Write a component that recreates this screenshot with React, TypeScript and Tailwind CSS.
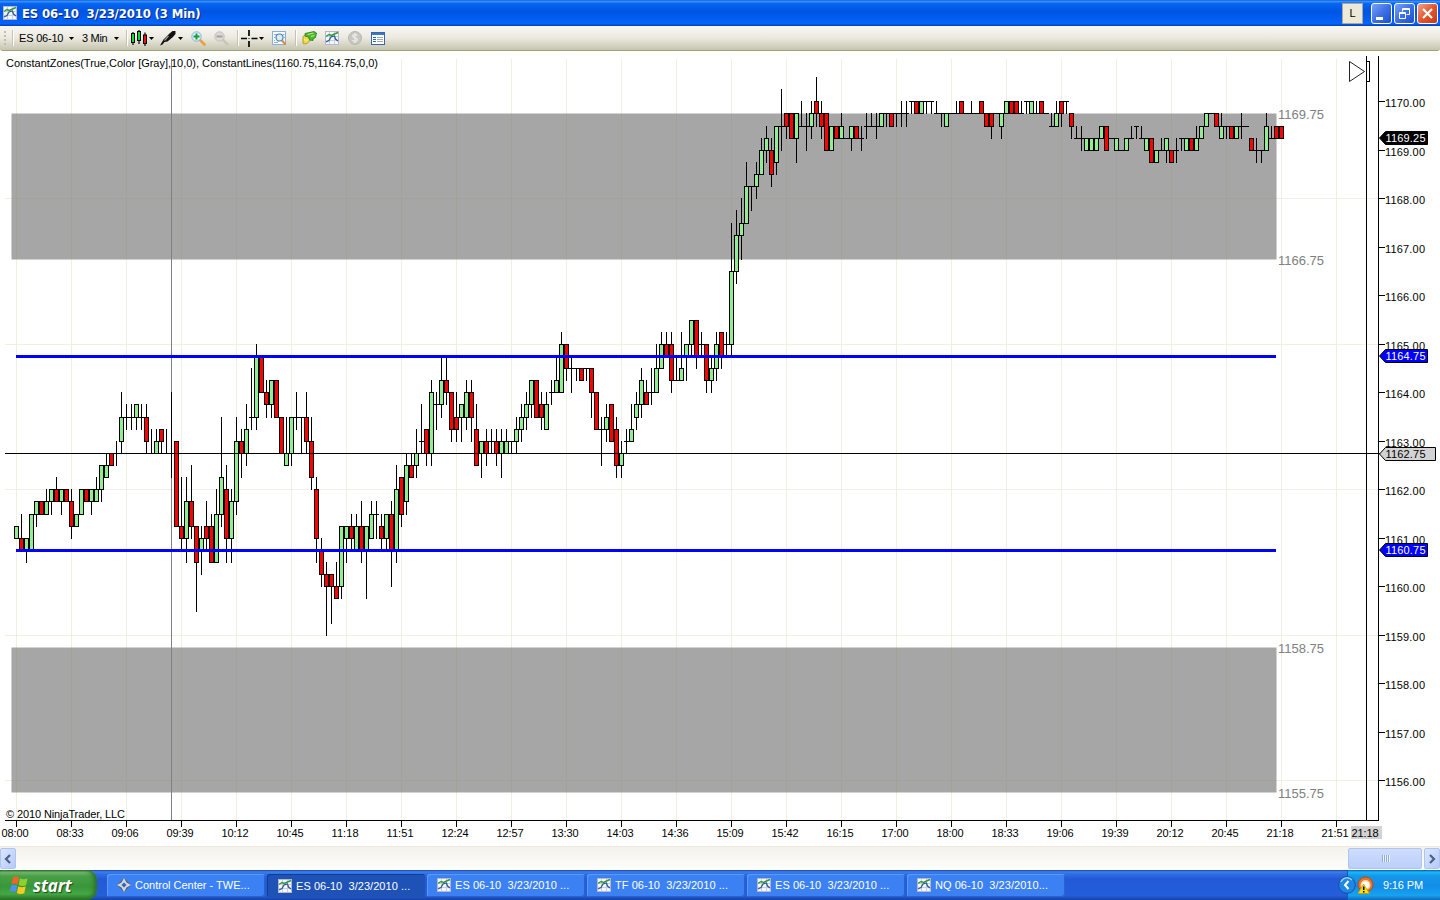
import React from "react";

// [high, open, close, low], counted in quarter points below 1170.00
const CANDLES: number[][] = [
  [35, 36, 35, 36], [34, 36, 37, 37], [36, 37, 36, 38], [34, 37, 34, 37], [33, 34, 33, 35],
  [33, 33, 34, 34], [32, 34, 33, 34], [32, 33, 32, 34], [31, 32, 33, 33], [32, 33, 32, 34],
  [32, 32, 33, 33], [32, 33, 35, 36], [34, 35, 34, 35], [32, 34, 32, 34], [32, 32, 33, 33],
  [32, 33, 32, 34], [31, 33, 32, 33], [30, 32, 30, 33], [29, 31, 30, 31], [29, 29, 30, 30],
  [28, 29, 29, 30], [24, 28, 26, 29], [25, 26, 26, 27], [25, 26, 26, 27], [25, 26, 25, 27],
  [25, 26, 26, 27], [25, 26, 28, 29], [27, 29, 29, 29], [27, 29, 28, 29], [27, 27, 28, 29],
  [27, 29, 29, 29], [24, 29, 29, 31], [28, 28, 35, 35], [31, 35, 36, 37], [31, 36, 33, 38],
  [30, 33, 35, 36], [35, 35, 38, 42], [35, 37, 36, 39], [33, 35, 36, 37], [34, 35, 38, 38],
  [32, 38, 34, 38], [26, 34, 31, 35], [30, 32, 36, 38], [32, 36, 33, 38], [26, 33, 28, 34],
  [27, 28, 29, 31], [25, 29, 27, 30], [22, 26, 26, 27], [20, 26, 21, 27], [21, 21, 24, 24],
  [23, 24, 25, 26], [23, 25, 23, 26], [23, 23, 26, 26], [26, 26, 29, 29], [26, 30, 29, 30],
  [26, 29, 26, 30], [24, 26, 26, 27], [26, 26, 26, 29], [24, 26, 28, 29], [26, 28, 31, 32],
  [31, 32, 36, 38], [36, 37, 39, 40], [38, 39, 40, 44], [39, 39, 40, 43], [38, 40, 41, 41],
  [35, 40, 35, 41], [35, 36, 35, 38], [34, 35, 36, 37], [34, 37, 35, 37], [33, 35, 37, 38],
  [35, 37, 35, 41], [33, 36, 34, 36], [33, 34, 34, 36], [34, 35, 36, 37], [34, 36, 34, 37],
  [33, 34, 37, 40], [30, 37, 32, 38], [31, 31, 34, 35], [29, 33, 30, 34], [29, 30, 31, 31],
  [27, 30, 29, 31], [25, 28, 28, 29], [27, 27, 29, 30], [23, 29, 24, 30], [24, 25, 25, 27],
  [21, 25, 23, 26], [21, 23, 24, 25], [24, 24, 27, 28], [24, 26, 27, 28], [25, 26, 25, 28],
  [23, 26, 24, 27], [23, 24, 26, 28], [25, 27, 30, 30], [28, 29, 28, 31], [27, 28, 29, 30],
  [27, 28, 28, 29], [27, 28, 29, 30], [27, 29, 28, 31], [27, 29, 28, 29], [28, 28, 28, 29],
  [26, 28, 27, 29], [25, 27, 26, 28], [24, 26, 25, 27], [23, 25, 23, 26], [23, 23, 26, 26],
  [24, 25, 26, 27], [24, 27, 25, 27], [23, 24, 24, 25], [21, 24, 23, 24], [19, 24, 20, 24],
  [20, 20, 22, 23], [21, 22, 22, 24], [22, 22, 22, 23], [22, 22, 23, 23], [22, 22, 22, 23],
  [22, 22, 24, 26], [24, 24, 27, 27], [26, 27, 27, 30], [25, 27, 26, 28], [25, 25, 28, 28],
  [26, 27, 30, 31], [28, 30, 29, 31], [27, 28, 28, 29], [25, 28, 27, 28], [24, 26, 25, 27],
  [22, 25, 23, 26], [23, 24, 25, 25], [22, 24, 24, 25], [20, 24, 22, 24], [19, 22, 20, 22],
  [19, 20, 21, 21], [19, 20, 23, 24], [21, 23, 23, 23], [19, 23, 22, 23], [20, 21, 20, 23],
  [18, 20, 18, 21], [18, 18, 21, 22], [19, 20, 20, 21], [20, 20, 23, 24], [21, 23, 22, 24],
  [19, 22, 20, 23], [19, 19, 21, 22], [19, 20, 20, 21], [10, 20, 14, 21], [9, 14, 11, 15],
  [8, 11, 10, 13], [5, 10, 7, 10], [7, 7, 7, 9], [5, 7, 6, 8], [3, 6, 4, 6],
  [2, 4, 3, 5], [3, 4, 6, 7], [2, 5, 2, 6], [-1, 2, 2, 4], [1, 1, 2, 3],
  [1, 1, 3, 3], [1, 3, 1, 5], [0, 2, 2, 2], [1, 2, 2, 4], [0, 2, 1, 3],
  [-2, 0, 1, 2], [0, 1, 2, 3], [1, 1, 4, 4], [2, 4, 2, 4], [2, 2, 3, 3],
  [1, 3, 2, 3], [3, 3, 3, 3], [2, 3, 2, 4], [2, 2, 3, 3], [2, 3, 3, 4],
  [1, 2, 2, 3], [1, 2, 2, 2], [1, 2, 2, 3], [1, 2, 1, 2], [1, 1, 1, 2],
  [1, 1, 2, 2], [1, 1, 1, 2], [0, 1, 1, 2], [0, 1, 1, 2], [0, 0, 0, 1],
  [0, 0, 1, 1], [0, 1, 0, 1], [0, 0, 0, 1], [0, 0, 0, 1], [0, 1, 1, 1],
  [1, 1, 1, 2], [1, 2, 1, 2], [1, 1, 1, 1], [0, 1, 1, 1], [0, 0, 1, 1],
  [1, 1, 1, 1], [0, 1, 1, 1], [1, 1, 1, 1], [0, 0, 1, 1], [1, 1, 2, 2],
  [1, 1, 2, 3], [1, 1, 1, 1], [1, 2, 1, 3], [0, 1, 0, 1], [0, 0, 1, 1],
  [0, 0, 1, 1], [0, 1, 1, 1], [0, 0, 0, 1], [0, 1, 0, 1], [0, 1, 1, 1],
  [0, 0, 1, 1], [1, 1, 1, 1], [1, 2, 2, 2], [0, 2, 1, 2], [0, 0, 1, 2],
  [0, 0, 0, 1], [1, 1, 2, 3], [2, 3, 3, 3], [2, 3, 3, 4], [3, 4, 3, 4],
  [3, 4, 3, 4], [3, 4, 3, 4], [2, 3, 2, 3], [2, 2, 4, 4], [3, 3, 3, 3],
  [3, 4, 3, 4], [4, 4, 4, 4], [3, 4, 3, 4], [2, 3, 3, 3], [2, 2, 2, 3],
  [2, 3, 3, 3], [3, 4, 3, 4], [3, 3, 5, 5], [4, 5, 4, 5], [3, 4, 4, 4],
  [3, 4, 3, 5], [4, 4, 5, 5], [3, 4, 4, 5], [3, 3, 3, 4], [3, 4, 3, 4],
  [3, 3, 4, 4], [2, 4, 3, 4], [2, 3, 2, 3], [1, 2, 1, 2], [1, 1, 1, 1],
  [1, 1, 2, 2], [1, 3, 2, 3], [2, 2, 2, 3], [2, 2, 3, 3], [2, 3, 2, 3],
  [1, 2, 2, 3], [2, 2, 2, 2], [3, 3, 4, 4], [3, 4, 4, 5], [4, 4, 4, 5],
  [1, 4, 2, 4], [2, 3, 3, 3], [2, 2, 3, 3], [2, 2, 3, 3],
];

const TIMES = [
  "08:00", "08:33", "09:06", "09:39", "10:12", "10:45", "11:18", "11:51", "12:24",
  "12:57", "13:30", "14:03", "14:36", "15:09", "15:42", "16:15", "17:00", "18:00",
  "18:33", "19:06", "19:39", "20:12", "20:45", "21:18", "21:51",
];

const PRICES = [1170, 1169, 1168, 1167, 1166, 1165, 1164, 1163, 1162, 1161, 1160, 1159, 1158, 1157, 1156];

const yOf = (t: number) => Math.floor(101.75 + t * 12.125);
const yPrice = (p: number) => yOf((1170 - p) * 4);

const Candle = ({ i, c }: { i: number; c: number[] }) => {
  const x = 16 + i * 5;
  const [high, open, close, low] = c;
  const top = yOf(Math.min(open, close));
  const bottom = yOf(Math.max(open, close));
  return (
    <g>
      <rect x={x} y={yOf(high)} width={1} height={yOf(low) - yOf(high) + 1} />
      <rect x={x - 2} y={top} width={5} height={bottom - top + 1} />
      {open !== close && (
        <rect x={x - 1} y={top + 1} width={3} height={bottom - top - 1} fill={close > open ? "#ff0000" : "#90ee90"} />
      )}
    </g>
  );
};

const Zone = ({ from, to }: { from: number; to: number }) => (
  <g>
    <rect x={11.5} y={yPrice(from) + 0.5} width={1265} height={yPrice(to) - yPrice(from)} fill="#808080" fillOpacity={0.7} />
    {[from, to].map((p) => (
      <text key={p} x={1278} y={yPrice(p) + 6} fontSize={13} fill="#808080" textLength={46} lengthAdjust="spacingAndGlyphs">{p.toFixed(2)}</text>
    ))}
  </g>
);

const Marker = ({ price, fill, color, w, dy = 0 }: { price: number; fill: string; color: string; w: number; dy?: number }) => {
  const y = yPrice(price) + dy;
  return (
    <g>
      <path d={`M1379.5 ${y}l6-6.5h${w}v13h-${w}z`} fill={fill} stroke="#000" />
      <text x={1385.5} y={y + 4} fill={color} textLength={40}>{price.toFixed(2)}</text>
    </g>
  );
};

const Chart = () => (
  <svg width={1440} height={795} viewBox="0 51 1440 795" className="block bg-white" fontFamily="'Liberation Sans', Arial, sans-serif" fontSize={11}>
    <g fill="#f0f0e2" shapeRendering="crispEdges">
      {TIMES.map((t, i) => <rect key={t} x={16 + i * 55} y={59} width={1} height={761} />)}
      {[1168, 1165, 1162, 1159, 1156].map((p) => <rect key={p} x={5} y={yPrice(p)} width={1373} height={1} />)}
    </g>
    <Zone from={1169.75} to={1166.75} />
    <Zone from={1158.75} to={1155.75} />
    <rect x={171} y={59} width={1} height={761} fill="#808080" />
    <g shapeRendering="crispEdges">
      {CANDLES.map((c, i) => <Candle key={i} i={i} c={c} />)}
    </g>
    <g shapeRendering="crispEdges">
      <rect x={16} y={355} width={1260} height={3} fill="#0000ff" />
      <rect x={16} y={549} width={1260} height={3} fill="#0000ff" />
      <rect x={5} y={453} width={1375} height={1} />
      <rect x={1366} y={56} width={1} height={765} />
      <rect x={1378} y={56} width={1} height={765} />
      <rect x={5} y={820} width={1374} height={1} />
    </g>
    {PRICES.map((p) => (
      <g key={p}>
        <rect x={1379} y={yPrice(p)} width={6} height={1} />
        <text x={1385} y={yPrice(p) + 5.5} textLength={40}>{p.toFixed(2)}</text>
      </g>
    ))}
    {TIMES.map((t, i) => (
      <g key={t}>
        <rect x={16 + i * 55} y={821} width={1} height={6} />
        <text x={1.5 + i * 55} y={837} textLength={27}>{t}</text>
      </g>
    ))}
    <rect x={1351} y={826} width={31} height={13} fill="#d3d3d3" />
    <text x={1351.5} y={837} textLength={27}>21:18</text>
    <text x={6} y={67} textLength={372}>ConstantZones(True,Color [Gray],10,0), ConstantLines(1160.75,1164.75,0,0)</text>
    <text x={6} y={818} textLength={119}>© 2010 NinjaTrader, LLC</text>
    <path d="M1349.5 61.5v20l15-10z" fill="none" stroke="#222" />
    <rect x={1366.5} y={61.5} width={3} height={20} fill="#fff" stroke="#000" />
    <Marker price={1169.25} fill="#000" color="#fff" w={42} />
    <Marker price={1164.75} fill="#0000ff" color="#fff" w={42} />
    <Marker price={1160.75} fill="#0000ff" color="#fff" w={42} />
    <Marker price={1162.75} fill="#d3d3d3" color="#000" w={50} dy={1} />
  </svg>
);

const ChartIcon = ({ className = "" }: { className?: string }) => (
  <svg width={14} height={14} viewBox="0 0 14 14" className={className}>
    <rect x={0.5} y={0.5} width={13} height={13} fill="#f4f6fa" stroke="#b4b8cc" />
    <path d="M4.500 1v12M9.500 1v12M1 5.500h12M1 9.500h12" stroke="#c9cde0" />
    <path d="M1 5.500l3-2 2.500 1 3-1.500 3.500-1.500" fill="none" stroke="#2f9a35" strokeWidth={1.4} />
    <path d="M1 11l3-1.500 2-3.500 3.500-1 1 3 2.500 2" fill="none" stroke="#2b5a9c" strokeWidth={1.3} />
  </svg>
);

const Caret = () => (
  <svg width={5} height={3} viewBox="0 0 5 3" className="shrink-0"><path d="M0 0h5L2.5 3z" /></svg>
);

const Separator = () => (
  <div className="h-4 w-[2px] shrink-0 border-l border-[#c5c2b2] bg-white" />
);

const Magnifier = ({ plus }: { plus?: boolean }) => (
  <svg width={15} height={15} viewBox="0 0 15 15">
    <path d="M9 9l4.500 4.500" stroke={plus ? "#e8a040" : "#c9c6be"} strokeWidth={2.6} strokeLinecap="round" />
    <circle cx={5.5} cy={5.5} r={4.7} fill={plus ? "#d8efff" : "#dad9d4"} stroke={plus ? "#7fb4d6" : "#c2c0ba"} />
    <path d={plus ? "M2.5 5.5h6M5.5 2.5v6" : "M2.5 5.5h6"} stroke={plus ? "#1f9a35" : "#a4a29c"} strokeWidth={2} />
  </svg>
);

const Toolbar = () => (
  <div className="flex h-[25px] items-center rounded-b-[3px] border-b border-[#a3a37c] bg-linear-to-b from-[#f8f7f3] via-[#ebe9df] to-[#c6c5b0] pl-1 font-['Liberation_Sans',Arial,sans-serif] text-[11px] text-black">
    <div className="flex w-[15px] shrink-0 items-center justify-between pr-[5px]">
      <div className="h-[14px] border-l-2 border-dotted border-[#c1beae]" />
      <Separator />
    </div>
    <div className="flex w-[55px] shrink-0 items-center justify-between">
      <span className="w-[44px] whitespace-nowrap tracking-[-0.2px]">ES 06-10</span>
      <Caret />
    </div>
    <div className="ml-[8px] flex w-[37px] shrink-0 items-center justify-between">
      <span className="w-[28px] whitespace-nowrap tracking-[-0.3px]">3 Min</span>
      <Caret />
    </div>
    <div className="ml-[7px]"><Separator /></div>
    <svg width={18} height={17} viewBox="0 0 18 17" className="ml-[2px]">
      <path d="M3 2v13M9 0v14M15 2.500v13.500" stroke="#000" strokeWidth={1.2} />
      <rect x={1.5} y={3.5} width={3} height={9} fill="#00e030" stroke="#000" />
      <rect x={7.5} y={1.5} width={3} height={9} fill="#00e030" stroke="#000" />
      <rect x={13.5} y={5} width={3} height={8.5} fill="#f01010" stroke="#000" />
    </svg>
    <div className="ml-[1px]"><Caret /></div>
    <svg width={17} height={17} viewBox="0 0 17 17" className="ml-[5px]">
      <path d="M1 15.500l3.500-6 6-6 3-2.500h3v3l-2.500 3-5.500 4.500-3 .5-2 2.500z" fill="#111" />
      <path d="M5.500 10.500l4-4.500" stroke="#999" strokeWidth={1.2} />
    </svg>
    <div className="ml-[2px]"><Caret /></div>
    <div className="ml-2"><Magnifier plus /></div>
    <div className="ml-2"><Magnifier /></div>
    <div className="ml-2"><Separator /></div>
    <svg width={17} height={17} viewBox="0 0 17 17" className="ml-[2px]">
      <path d="M8 0v6M8 11v6M0 8.500h6M10.500 8.500h6" stroke="#000" strokeWidth={1.7} />
      <path d="M7.500 8.500h1" stroke="#000" />
    </svg>
    <div className="ml-[1px]"><Caret /></div>
    <svg width={15} height={15} viewBox="0 0 15 15" className="ml-2">
      <rect x={0.5} y={0.5} width={13} height={13} fill="#f6faff" stroke="#86aede" />
      <path d="M2 3.500h3M2 6.500h1M2 9.500h1M2 11.500h4M11 3.500h1.500M12 6.500h1" stroke="#8eb2df" />
      <circle cx={7.500} cy={6.500} r={3.500} fill="#d5effa" stroke="#5c8098" strokeWidth={1.2} />
      <path d="M10 9.500l3.500 4" stroke="#e08a3c" strokeWidth={2} />
    </svg>
    <div className="ml-2"><Separator /></div>
    <svg width={15} height={14} viewBox="0 0 15 14" className="ml-[5px]">
      <path d="M1 5.500c2-1.500 4-1 6 0l1 3c-1 4-5 5-7 4z" fill="#f0d64a" stroke="#b0a020" />
      <path d="M3 2.500l9-2 2.500 1.500-1 4.500-2.500 1.500v1.500l-3.500-.5-1-3-3.500-1z" fill="#49b92e" stroke="#267a1a" strokeWidth={0.800} />
      <path d="M5.500 3.500l6-1.500M9 5.500l3.500-1" stroke="#b8ea83" strokeWidth={1.2} />
      <path d="M2 8.500c2 1 3 1 4.500 0" stroke="#fff6b0" fill="none" />
    </svg>
    <ChartIcon className="ml-2" />
    <svg width={14} height={14} viewBox="0 0 14 14" className="ml-[9px]">
      <circle cx={7} cy={7} r={6.500} fill="#c8c7c2" stroke="#b7b5ae" />
      <path d="M9.500 4.500c-1-1.500-5-1.200-4.800.7s4.700 1.500 4.700 3.500-3.900 2-5 .5M7 2v10" fill="none" stroke="#ecebe6" strokeWidth={1.300} />
    </svg>
    <svg width={14} height={13} viewBox="0 0 14 13" className="ml-[9px]">
      <rect x={0.5} y={0.5} width={13} height={12} fill="#fff" stroke="#3b65a5" />
      <path d="M1 2h12" stroke="#3f74cc" strokeWidth={2} />
      <path d="M2 5.500h3M2 7.500h3M2 9.500h3" stroke="#3566b0" />
      <path d="M6 5.500h6M6 7.500h6M6 9.500h6" stroke="#a1a6b4" />
    </svg>
  </div>
);

const TitleBar = () => (
  <div className="flex h-[26px] items-center bg-[linear-gradient(#0a5bdc_0%,#3c93ff_5%,#0664f0_14%,#0054e3_45%,#0560f5_80%,#0466fb_90%,#0340b5_100%)] pl-[3px] pr-[2px]">
    <ChartIcon />
    <span className="ml-[5px] mt-[1px] w-[180px] whitespace-pre font-['DejaVu_Sans_Condensed','DejaVu_Sans',sans-serif] text-[13px] font-bold tracking-[-0.15px] text-white [text-shadow:1px_1px_0_#0a2a80]">ES 06-10  3/23/2010 (3 Min)</span>
    <div className="ml-auto flex items-center">
      <div className="mr-2 flex h-[21px] w-[21px] items-center justify-center border border-[#aca899] bg-[#ece9d8] font-['Liberation_Sans',Arial,sans-serif] text-[11px]">L</div>
      <div className="flex gap-[2px]">
        <div className="h-[21px] w-[21px] rounded-[3px] border border-white bg-linear-to-br from-[#7ba2f2] via-[#3f6fe6] to-[#1b4fc8]">
          <div className="ml-1 mt-[13px] h-[3px] w-[7px] bg-white" />
        </div>
        <div className="flex h-[21px] w-[21px] items-center justify-center rounded-[3px] border border-white bg-linear-to-br from-[#7ba2f2] via-[#3f6fe6] to-[#1b4fc8]">
          <svg width={11} height={11} viewBox="0 0 11 11" fill="none" stroke="#fff">
            <path d="M3.500 3.500v-3h7v6h-3M3 1.500h8" />
            <path d="M.5 4.500h6v6h-6zM0 5.500h7" />
          </svg>
        </div>
        <div className="flex h-[21px] w-[21px] items-center justify-center rounded-[3px] border border-white bg-linear-to-br from-[#f0a088] via-[#e2552f] to-[#c63a12]">
          <svg width={11} height={11} viewBox="0 0 11 11"><path d="M1 1l9 9M10 1l-9 9" stroke="#fff" strokeWidth={2.200} /></svg>
        </div>
      </div>
    </div>
  </div>
);

const ScrollButton = ({ d }: { d: string }) => (
  <div className="flex h-[21px] w-[16px] items-center justify-center rounded-[2px] border border-[#b0c4f0] bg-linear-to-br from-[#dbe5fe] to-[#b5cafb]">
    <svg width={8} height={10} viewBox="0 0 8 10"><path d={d} fill="none" stroke="#4d6185" strokeWidth={2.200} /></svg>
  </div>
);

const ScrollBar = () => (
  <div className="flex h-6 items-center border-t border-[#eceadf] bg-linear-to-b from-[#f3f2ec] to-[#fefefc]">
    <ScrollButton d="M6 1L2 5l4 4" />
    <div className="ml-auto mr-[2px] flex h-[21px] w-[74px] items-center justify-center gap-[1px] rounded-[2px] border border-[#b0c4f0] bg-linear-to-b from-[#cfddfd] to-[#bbcffa]">
      {[0, 1, 2, 3].map((n) => <div key={n} className="h-[7px] w-px bg-[#8caaea] shadow-[1px_0_0_#eef4fe]" />)}
    </div>
    <ScrollButton d="M2 1l4 4-4 4" />
  </div>
);

const TASKS = ["ES 06-10  3/23/2010 ...", "ES 06-10  3/23/2010 ...", "TF 06-10  3/23/2010 ...", "ES 06-10  3/23/2010 ...", "NQ 06-10  3/23/2010..."];

const TaskBar = () => (
  <div className="flex h-[30px] items-center bg-[linear-gradient(#1941a5_0%,#3a80ee_6%,#2f6de4_14%,#2359d6_30%,#245edb_85%,#1941a5_100%)] font-['Liberation_Sans',Arial,sans-serif] text-[11px] text-white">
    <div className="flex h-[30px] w-[97px] items-center rounded-r-[10px] bg-[linear-gradient(#2a6f2a_0%,#7dbb78_7%,#48a046_20%,#3a963a_55%,#43a843_80%,#2a7026_100%)] pl-[10px] shadow-[inset_-3px_0_4px_#2a702a]">
      <svg width={19} height={18} viewBox="0 0 19 18">
        <path d="M3 1.500c2-1.500 4-1 6 .2L7.500 8.500c-2-1.200-4-1.500-6-.2z" fill="#f06428" />
        <path d="M10 2.200c2 1.200 4 1.300 7.500.2L16 9.200c-2 1-5 1-7.300-.2z" fill="#8bd22c" />
        <path d="M1.200 9.500c2-1.300 4-1 6 .2l-1.400 6.600c-2-1.200-4-1.400-6-.2z" fill="#4d90f0" />
        <path d="M8.300 10.200c2 1.200 4 1.300 7.400.2L14.200 17.200c-2 1-5 1-7.300-.2z" fill="#fbca1c" />
      </svg>
      <span className="ml-[4px] font-['Open_Sans',sans-serif] text-[17px] font-bold italic leading-none tracking-[-0.1px] [text-shadow:1px_1px_1px_#1c4a1c]">start</span>
    </div>
    <div className="ml-[10px] flex gap-[2px]">
      <div className="flex h-[23px] w-[158px] items-center rounded-[3px] bg-[#3c81f3] pl-[10px] shadow-[inset_1px_1px_0_#5d9bfa,inset_-1px_-1px_0_#2a62cf]">
        <svg width={14} height={14} viewBox="0 0 14 14">
          <path d="M7 0l7 7-7 7-7-7z" fill="#555e6a" />
          <path d="M7 0l2.500 4.500L14 7 9.500 9.500 7 14 4.500 9.500 0 7l4.500-2.500z" fill="#d2d5d9" />
          <path d="M7 4.500L9.500 7 7 9.500 4.500 7z" fill="#2765c8" />
        </svg>
        <span className="ml-[4px] whitespace-pre">Control Center - TWE...</span>
      </div>
      {TASKS.map((t, i) => (
        <div
          key={i}
          className={`flex h-[23px] w-[158px] items-center rounded-[3px] ${i === 0 ? "bg-[#1e52b7] pl-[11px] pt-[2px] shadow-[inset_1px_1px_0_#133d8e]" : "bg-[#3c81f3] pl-[10px] shadow-[inset_1px_1px_0_#5d9bfa,inset_-1px_-1px_0_#2a62cf]"}`}
        >
          <ChartIcon />
          <span className="ml-[4px] whitespace-pre tracking-[0.05px]">{t}</span>
        </div>
      ))}
    </div>
    <div className="ml-auto flex h-[30px] w-[93px] items-center border-l border-[#095bc9] bg-[linear-gradient(#0c59b9_0%,#18b9f5_7%,#1597ea_20%,#128de8_55%,#17a2f0_85%,#1168b8_100%)]">
      <svg width={36} height={18} viewBox="0 0 36 18" className="-ml-[10px] shrink-0">
        <circle cx={9} cy={9} r={8.300} fill="#1d87e2" stroke="#1b4fa5" />
        <path d="M3 6a6.500 6.500 0 0 1 11-2" fill="none" stroke="#8ed4ff" strokeWidth={1.500} />
        <path d="M10.500 5L7 9l3.500 4" fill="none" stroke="#fff" strokeWidth={2} />
        <circle cx={27.500} cy={8.500} r={7.500} fill="#e87422" stroke="#b34a12" />
        <circle cx={27.500} cy={9} r={4.300} fill="#fff" stroke="#ffd7a2" strokeWidth={1.500} />
        <path d="M25.500 8l6 9.500H20z" fill="#ffe000" stroke="#c49800" strokeWidth={0.700} />
        <path d="M25.700 10.500v3.500M25.700 15v1.500" stroke="#000" strokeWidth={1.500} />
      </svg>
      <span className="ml-[9px] whitespace-nowrap tracking-[-0.15px]">9:16 PM</span>
    </div>
  </div>
);

const App = () => {
  return (
    <div className="flex h-[900px] w-[1440px] flex-col overflow-hidden bg-white">
      <TitleBar />
      <Toolbar />
      <Chart />
      <ScrollBar />
      <TaskBar />
    </div>
  );
};

export default App;
